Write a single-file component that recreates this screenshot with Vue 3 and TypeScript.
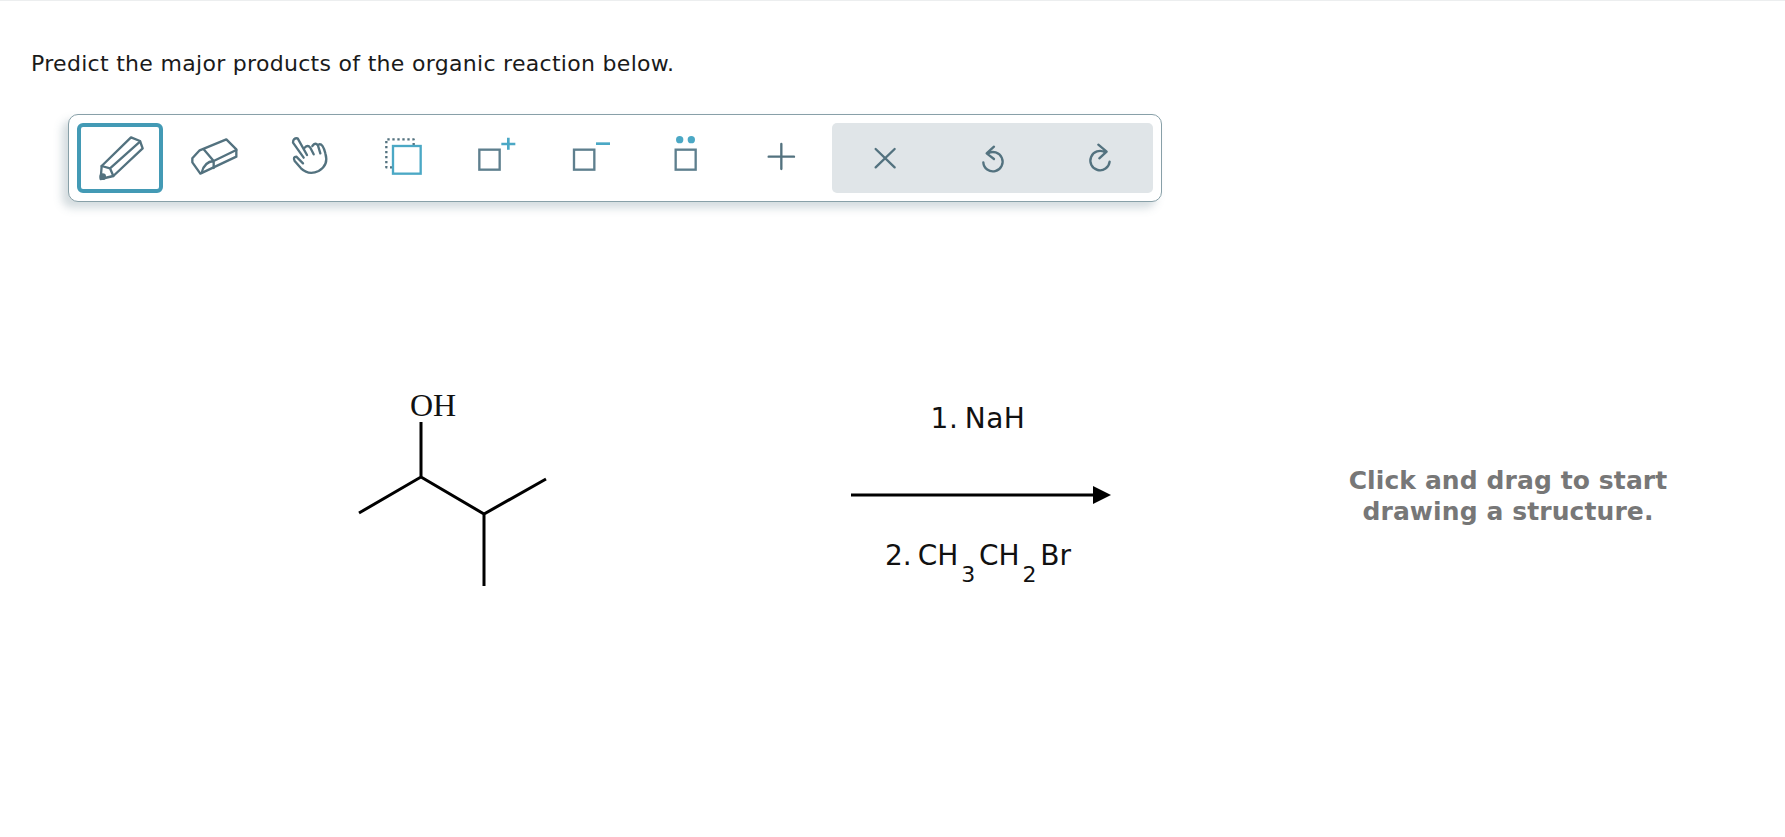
<script setup lang="ts">
const question = 'Predict the major products of the organic reaction below.'
</script>

<template>
  <main class="page">
    <p class="question">{{ question }}</p>

    <div class="toolbar" role="toolbar">
      <button class="tool selected" aria-label="Draw">
        <svg viewBox="51 54 258 210">
          <path d="M125 183 L213 97 L240 108 L248 130 L160 213 L122 222 Z" />
          <path d="M125 183 L150 190 L160 213 M150 190 L240 110" />
          <circle class="solid" cx="128" cy="215" r="10" />
        </svg>
      </button>
      <button class="tool" aria-label="Erase">
        <svg viewBox="334 54 258 210">
          <path d="M398 160 L420 136 L500 103 L530 133 L530 155 L422 206 L398 172 Z" />
          <path d="M432 133 L462 168 L530 135 M462 168 L462 189 M462 168 Q434 170 426 203" />
        </svg>
      </button>
      <button class="tool" aria-label="Move">
        <svg viewBox="617 54 258 210">
          <path d="M730 158 L698 113 Q698 98 712 100 L740 150 M733 128 Q742 118 750 128 L760 148 M756 123 Q765 110 773 122 L780 145 M776 118 Q788 115 795 145 Q806 180 775 198 Q745 212 722 190 L703 168 Q697 155 708 155 L728 175" />
        </svg>
      </button>
      <button class="tool" aria-label="Select">
        <svg viewBox="901 54 258 210">
          <path class="dash" d="M1062 121 L1062 103 L980 103 L980 187 L1000 187" />
          <rect class="accent" x="1000" y="123" width="83" height="83" />
        </svg>
      </button>
      <button class="tool" aria-label="Add charge">
        <svg viewBox="-16 52 258 210">
          <rect class="box" x="57" y="132" width="61" height="60" />
          <path class="accent thick" d="M123 115 H165 M144 96 V132" />
        </svg>
      </button>
      <button class="tool" aria-label="Remove charge">
        <svg viewBox="267 52 258 210">
          <rect class="box" x="342" y="132" width="61" height="60" />
          <path class="accent thick" d="M408 114 H450" />
        </svg>
      </button>
      <button class="tool" aria-label="Lone pair">
        <svg viewBox="550 52 258 210">
          <rect class="box" x="648" y="132" width="60" height="60" />
          <circle class="dot" cx="660" cy="102" r="11" />
          <circle class="dot" cx="695" cy="102" r="11" />
        </svg>
      </button>
      <button class="tool" aria-label="Add">
        <svg viewBox="833 52 258 210">
          <path d="M925 153 H1001 M963 115 V190" />
        </svg>
      </button>

      <div class="actions">
        <button class="action" aria-label="Clear">
          <svg viewBox="36 54 321 210">
            <path d="M167 132 L224 187 M224 132 L167 187" />
          </svg>
        </button>
        <button class="action" aria-label="Undo">
          <svg viewBox="357 52 321 210">
            <path d="M503 144 A29 29 0 1 1 490 170 M522 123 L500 143 L522 160" />
          </svg>
        </button>
        <button class="action" aria-label="Redo">
          <svg viewBox="678 52 321 210">
            <path d="M855 140 A29 29 0 1 0 869 168 M835 117 L860 138 L838 158" />
          </svg>
        </button>
      </div>
    </div>

    <section class="canvas">
      <svg class="molecule" width="220" height="210" viewBox="340 380 220 210">
        <text x="410" y="415.5">OH</text>
        <path d="M421 422 V477 L359 513 M421 477 L484 514 L546 479 M484 514 V586" />
      </svg>

      <div class="reaction">
        <div class="reagent first">1. NaH</div>
        <svg class="arrow" width="260" height="20" viewBox="0 0 260 20">
          <path class="shaft" d="M0 10 H245" />
          <path d="M242 1 L260 10 L242 19 Z" />
        </svg>
        <div class="reagent second">2. CH<sub>3</sub>CH<sub>2</sub>Br</div>
      </div>

      <p class="hint">Click and drag to start<br />drawing a structure.</p>
    </section>
  </main>
</template>

<style>
html,
body {
  margin: 0;
  background: #fff;
}
</style>

<style scoped>
.page {
  height: 837px;
  box-sizing: border-box;
  overflow: hidden;
  border-top: 1px solid #eceeef;
  padding: 0 31px;
  font-family: "DejaVu Sans", sans-serif;
  color: #1a1a1a;
}
.question {
  margin: 0;
  padding-top: 49px;
  font-size: 22px;
  letter-spacing: 0.3px;
  line-height: 27px;
}
.toolbar {
  display: flex;
  gap: 8.4px;
  box-sizing: border-box;
  width: 1094px;
  height: 88px;
  margin: 37px 0 0 37px;
  padding: 8px;
  border: 1px solid #88a0a8;
  border-radius: 10px;
  background: #fff;
  box-shadow: -6px 6px 9px rgba(83, 114, 127, 0.25);
}
button {
  display: block;
  padding: 0;
  border: 0;
  background: none;
}
.tool {
  box-sizing: border-box;
  flex: 0 0 86px;
  height: 70px;
  border-radius: 6px;
  position: relative;
}
.tool.selected::after {
  content: "";
  position: absolute;
  inset: 0;
  border: 4px solid #439ab5;
  border-radius: 6px;
}
.tool svg,
.action svg {
  display: block;
  width: 100%;
  height: 100%;
  fill: none;
  stroke: #53727f;
  stroke-width: 7;
  stroke-linejoin: round;
  stroke-linecap: round;
}
.tool .solid {
  fill: #53727f;
  stroke: none;
}
.tool .dash {
  stroke-dasharray: 7 8;
  stroke-linecap: butt;
}
.tool .accent {
  stroke: #4ba8c5;
  stroke-linecap: butt;
  stroke-linejoin: miter;
}
.tool .thick {
  stroke-width: 8;
}
.tool .box {
  stroke: #5e7f8e;
  stroke-width: 7;
  stroke-linejoin: miter;
}
.tool .dot {
  fill: #4ba8c5;
  stroke: none;
}
.actions {
  flex: 1;
  display: flex;
  height: 70px;
  border-radius: 5px;
  background: #e0e5e8;
}
.action {
  flex: 1;
  height: 70px;
}
.canvas {
  display: flex;
  align-items: flex-start;
  margin-top: 178px;
}
.molecule {
  flex: none;
  margin-left: 309px;
  fill: none;
  stroke: #000;
  stroke-width: 3;
  stroke-linejoin: miter;
}
.molecule text {
  font-family: "Liberation Serif", serif;
  font-size: 32px;
  fill: #111;
  stroke: none;
}
.reaction {
  flex: none;
  width: 260px;
  margin: 19px 0 0 291px;
  display: flex;
  flex-direction: column;
}
.reagent {
  width: 254px;
  text-align: center;
  font-size: 28px;
  word-spacing: -3px;
  line-height: 40px;
  color: #111;
}
.first {
  letter-spacing: 0.5px;
}
.reagent sub {
  font-size: 22px;
  line-height: 0;
  vertical-align: -17px;
  margin: 0 3.7px 0 3px;
}
.arrow {
  display: block;
  margin-top: 46px;
}
.second {
  margin-top: 31px;
}
.arrow .shaft {
  fill: none;
  stroke: #000;
  stroke-width: 3;
}
.hint {
  flex: none;
  width: 400px;
  margin: 85px 0 0 197px;
  text-align: center;
  font-size: 25px;
  letter-spacing: 0.1px;
  line-height: 31px;
  font-weight: 700;
  color: #777;
}
</style>
